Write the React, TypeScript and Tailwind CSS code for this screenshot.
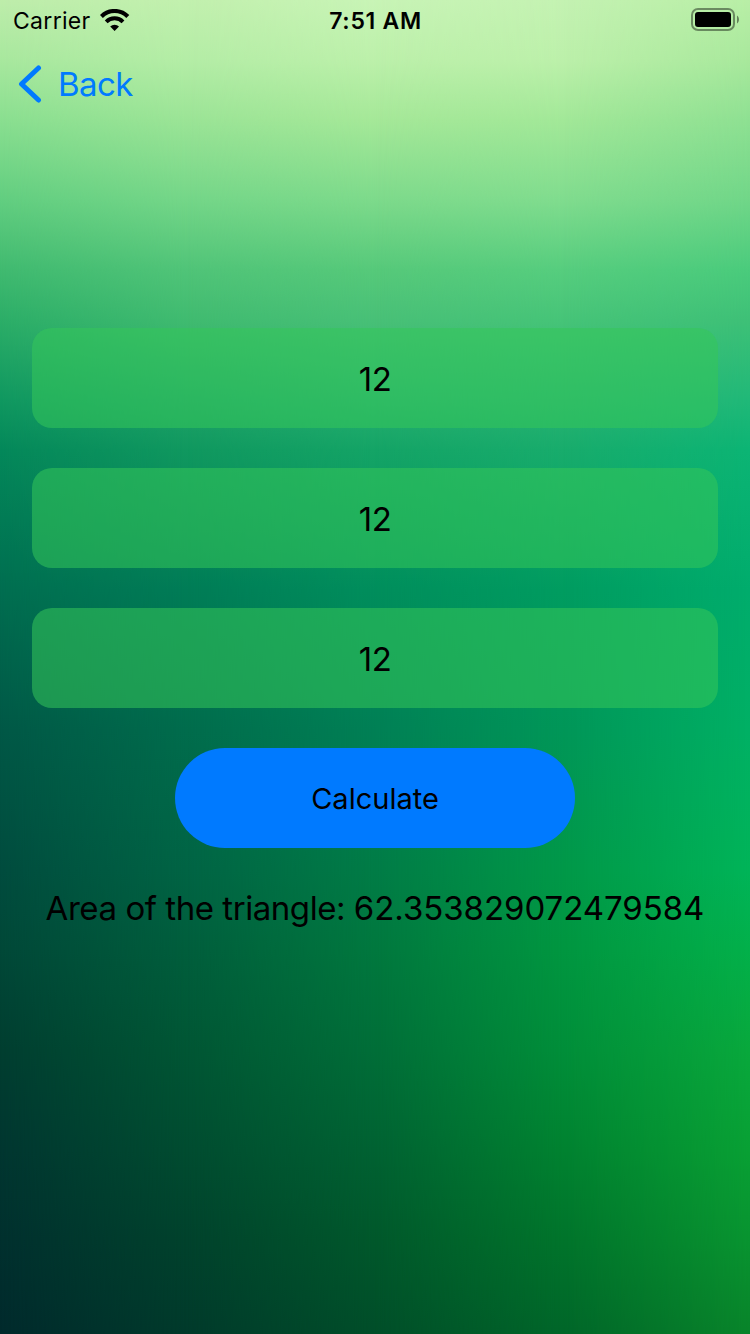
import { useState } from "react";

// Colour mesh of the wallpaper: vertical stops shared by five columns.
const rows = [0, 60, 120, 200, 270, 320, 400, 450, 590, 730, 870, 950, 1050, 1150, 1240, 1334];
const columns = [
  ["#beedab", "#a8e89e", "#8adf90", "#62ce80", "#40ba70", "#2cae68", "#109860", "#04885a", "#006e50", "#005846", "#004c3e", "#004838", "#003e30", "#003630", "#00302e", "#002a2c"],
  ["#c2f0ae", "#b4eda6", "#9be496", "#74d688", "#50c478", "#40bb70", "#20a468", "#10985f", "#007c56", "#006c4c", "#006444", "#005e3c", "#005634", "#004c30", "#00422c", "#003a2b"],
  ["#c8f4b6", "#bcf0aa", "#a5e898", "#7dda8b", "#56c97a", "#48c077", "#28b070", "#14a466", "#008e5c", "#008055", "#007c46", "#00783e", "#006e38", "#006232", "#00582b", "#004e29"],
  ["#c4f2b2", "#bcf0aa", "#a2e898", "#80dc8e", "#56cd7e", "#46c478", "#2ab472", "#18ac6c", "#009c60", "#009658", "#009848", "#009640", "#008e39", "#008230", "#00742b", "#006629"],
  ["#b8eea6", "#a8e89c", "#8ee092", "#70d688", "#4acb7c", "#3ec077", "#20b878", "#0cb474", "#00ac6c", "#00b064", "#00b458", "#02b04a", "#08a83c", "#08a034", "#089430", "#08842a"],
];

function Wallpaper() {
  return (
    <div className="absolute inset-0 -z-10">
      {columns.map((stops, i) => {
        const fade = `linear-gradient(to right, transparent ${(i - 1) * 25}%, black ${i * 25}%)`;
        return (
          <div
            key={i}
            className="absolute inset-0"
            style={{
              backgroundImage: `linear-gradient(to bottom, ${stops.map((c, j) => `${c} ${rows[j]}px`).join(", ")})`,
              maskImage: i === 0 ? undefined : fade,
            }}
          />
        );
      })}
    </div>
  );
}

function WifiIcon() {
  return (
    <svg className="h-[22px] w-[30px]" viewBox="0 0 30 22" fill="none" stroke="black">
      <path d="M1.400 7.500a18.600 18.600 0 0 1 26.400 0" strokeWidth="4.200" />
      <path d="M6.200 12.800a11.800 11.800 0 0 1 16.800 0" strokeWidth="3.900" />
      <path d="M14.600 22l-4.400-4.400a6.200 6.200 0 0 1 8.800 0z" fill="black" stroke="none" />
    </svg>
  );
}

function BatteryIcon() {
  return (
    <svg className="h-[23px] w-[48px]" viewBox="0 0 48 23">
      <rect x="1" y="1" width="42" height="21" rx="6" fill="none" stroke="black" strokeOpacity="0.42" strokeWidth="2" />
      <rect x="4" y="4" width="36" height="15" rx="3" fill="black" />
      <path d="M46 7.500c2.600 1.400 2.600 6.600 0 8z" fill="black" fillOpacity="0.45" />
    </svg>
  );
}

function SideField() {
  const [value, setValue] = useState("12");
  return (
    <input
      className="h-[100px] w-full rounded-[20px] bg-[#34c759]/55 pt-[2px] text-center text-[33px] tracking-[-0.4px] text-black outline-none"
      value={value}
      onChange={(e) => setValue(e.target.value)}
    />
  );
}

export default function App() {
  return (
    <div className="relative isolate flex h-[1334px] w-[750px] flex-col overflow-hidden font-['Inter',sans-serif] text-black">
      <Wallpaper />
      <header className="grid h-10 grid-cols-3 items-center pr-[11px] pl-[13px]">
        <div className="flex items-center gap-[9px]">
          <span className="pt-[2px] text-[23px] leading-none tracking-[0.3px]">Carrier</span>
          <WifiIcon />
        </div>
        <span className="pt-[2px] pr-[1px] text-center text-[23px] leading-none font-semibold tracking-[0.7px]">7:51 AM</span>
        <div className="flex justify-end pb-[1px]">
          <BatteryIcon />
        </div>
      </header>
      <nav className="flex h-[88px] items-center pl-[18px]">
        <button className="flex items-center gap-[16px] text-[33px] leading-none text-[#007aff]">
          <svg className="h-[38px] w-6" viewBox="0 0 24 38" fill="none" stroke="currentColor" strokeWidth="5" strokeLinecap="round" strokeLinejoin="round">
            <path d="M20.500 3L3.500 19l17 16" />
          </svg>
          <span className="pt-[1px] tracking-[-0.600px]">Back</span>
        </button>
      </nav>
      <main className="flex flex-col items-center gap-10 px-8 pt-[200px]">
        <SideField />
        <SideField />
        <SideField />
        <button className="h-[100px] w-[400px] rounded-full bg-[#007aff] pt-[2px] text-[29px]">Calculate</button>
        <p className="text-[33px] leading-10 tracking-[-0.450px] whitespace-nowrap">
          Area of the triangle: <span className="tracking-[-0.050px]">62.353829072479584</span>
        </p>
      </main>
    </div>
  );
}
